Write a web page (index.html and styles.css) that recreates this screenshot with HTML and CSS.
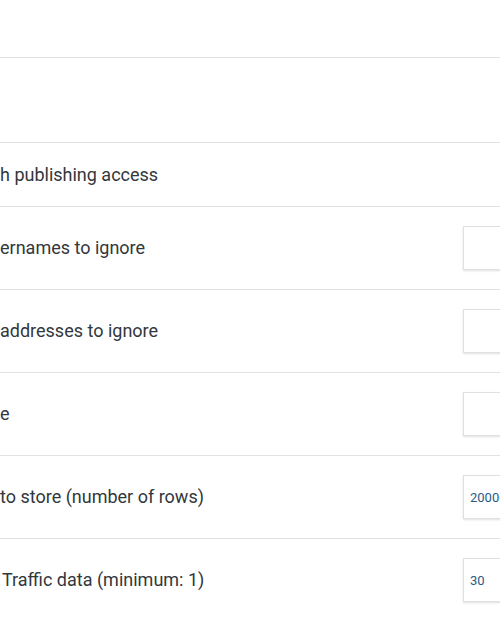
FILE: index.html
```html
<!DOCTYPE html>
<html>
<head>
<meta charset="utf-8">
<link rel="stylesheet" href="styles.css">
</head>
<body>
<div class="settings">
  <div class="block block-top"></div>
  <div class="block block-mid"></div>
  <div class="row row-short">
    <span class="label">h publishing access</span>
  </div>
  <div class="row">
    <span class="label">ernames to ignore</span>
    <input class="field" type="text" value="">
  </div>
  <div class="row">
    <span class="label">addresses to ignore</span>
    <input class="field" type="text" value="">
  </div>
  <div class="row">
    <span class="label">e</span>
    <input class="field" type="text" value="">
  </div>
  <div class="row">
    <span class="label">to store (number of rows)</span>
    <input class="field" type="text" value="2000000">
  </div>
  <div class="row">
    <span class="label label-space">Traffic data (minimum: 1)</span>
    <input class="field" type="text" value="30">
  </div>
</div>
</body>
</html>
```

FILE: styles.css
```css
html, body {
  margin: 0;
  padding: 0;
  background: #ffffff;
  overflow: hidden;
}

body {
  width: 500px;
  height: 620px;
  font-family: Roboto, "Liberation Sans", Arial, sans-serif;
  color: #32373c;
}

.settings {
  width: 663px;
  display: flex;
  flex-direction: column;
}

.block {
  border-bottom: 1px solid #e2e2e2;
}

.block-top {
  height: 57px;
}

.block-mid {
  height: 84px;
}

.row {
  display: flex;
  align-items: center;
  justify-content: space-between;
  height: 82px;
  border-bottom: 1px solid #e2e2e2;
}

.row-short {
  height: 63px;
}

.label {
  font-size: 18px;
  line-height: 22px;
  white-space: nowrap;
}

.label-space {
  padding-left: 2px;
}

.field {
  flex: 0 0 200px;
  box-sizing: border-box;
  height: 44px;
  margin: 0;
  padding: 0 6px;
  border: 1px solid #e0e0e0;
  border-radius: 0;
  box-shadow: 0 1px 2px rgba(0, 0, 0, 0.12);
  background: #ffffff;
  font-family: Roboto, "Liberation Sans", Arial, sans-serif;
  font-size: 13px;
  color: #2a5a86;
  outline: none;
}
```
